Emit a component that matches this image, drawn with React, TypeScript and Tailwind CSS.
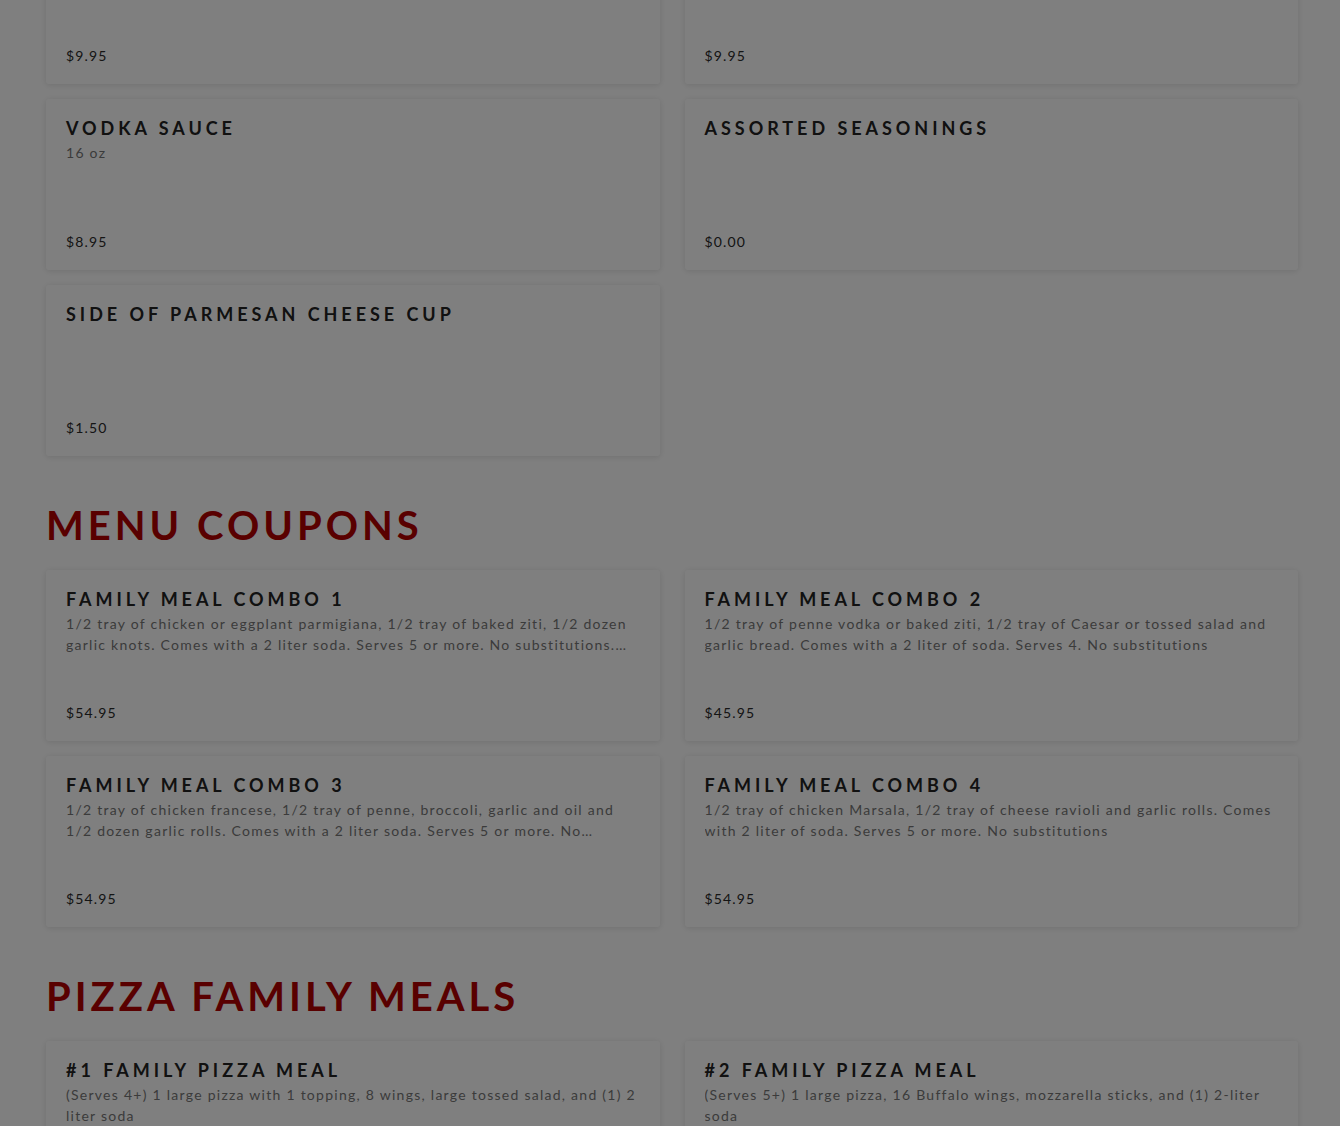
import React from 'react';

type Item = { title: string; desc?: string; price: string };

const topItems: Item[] = [
  { title: 'Marinara Sauce', desc: '16 oz', price: '$9.95' },
  { title: 'Alfredo Sauce', desc: '16 oz', price: '$9.95' },
  { title: 'Vodka Sauce', desc: '16 oz', price: '$8.95' },
  { title: 'Assorted Seasonings', price: '$0.00' },
  { title: 'Side of Parmesan Cheese Cup', price: '$1.50' },
];

const coupons: Item[] = [
  {
    title: 'Family Meal Combo 1',
    desc: '1/2 tray of chicken or eggplant parmigiana, 1/2 tray of baked ziti, 1/2 dozen garlic knots. Comes with a 2 liter soda. Serves 5 or more. No substitutions. Tax not included.',
    price: '$54.95',
  },
  {
    title: 'Family Meal Combo 2',
    desc: '1/2 tray of penne vodka or baked ziti, 1/2 tray of Caesar or tossed salad and garlic bread. Comes with a 2 liter of soda. Serves 4. No substitutions',
    price: '$45.95',
  },
  {
    title: 'Family Meal Combo 3',
    desc: '1/2 tray of chicken francese, 1/2 tray of penne, broccoli, garlic and oil and 1/2 dozen garlic rolls. Comes with a 2 liter soda. Serves 5 or more. No substitutions.',
    price: '$54.95',
  },
  {
    title: 'Family Meal Combo 4',
    desc: '1/2 tray of chicken Marsala, 1/2 tray of cheese ravioli and garlic rolls. Comes with 2 liter of soda. Serves 5 or more. No substitutions',
    price: '$54.95',
  },
];

const pizzaMeals: Item[] = [
  {
    title: '#1 Family Pizza Meal',
    desc: '(Serves 4+) 1 large pizza with 1 topping, 8 wings, large tossed salad, and (1) 2 liter soda',
    price: '$39.95',
  },
  {
    title: '#2 Family Pizza Meal',
    desc: '(Serves 5+) 1 large pizza, 16 Buffalo wings, mozzarella sticks, and (1) 2-liter soda',
    price: '$49.95',
  },
];

const MenuCard: React.FC<{ item: Item }> = ({ item }) => (
  <div className="h-[171px] bg-white rounded-[3px] shadow-[0_1px_6px_rgba(0,0,0,0.12)] pt-4 px-5 pb-5 flex flex-col cursor-pointer">
    <h3 className="mt-px font-['Lato',sans-serif] font-bold uppercase text-[18px] leading-6 tracking-[0.22em] text-[#222]">
      {item.title}
    </h3>
    {item.desc && (
      <p className="mt-0.5 font-['Lato',sans-serif] text-[14px] leading-[21px] tracking-[0.09em] text-[#777] line-clamp-2">
        {item.desc}
      </p>
    )}
    <div className="mt-auto font-['Lato',sans-serif] text-[14px] leading-4 tracking-[0.08em] text-[#2a2a2a]">
      {item.price}
    </div>
  </div>
);

const Section: React.FC<{ title: string; items: Item[] }> = ({ title, items }) => (
  <section>
    <h2 className="mt-[45px] mb-[21px] font-['Lato',sans-serif] font-bold uppercase text-[40px] leading-[48px] tracking-[0.1em] text-[#b30000]">
      {title}
    </h2>
    <div className="grid grid-cols-2 gap-x-[25px] gap-y-[15px]">
      {items.map((item, i) => (
        <MenuCard key={i} item={item} />
      ))}
    </div>
  </section>
);

export default function App() {
  return (
    <div className="relative h-[1126px] overflow-hidden bg-white">
      <div className="w-[1252px] ml-[46px] -mt-[87px]">
        {/* Sides & sauces (continued) */}
        <div className="grid grid-cols-2 gap-x-[25px] gap-y-[15px]">
          {topItems.map((item, i) => (
            <MenuCard key={i} item={item} />
          ))}
        </div>

        <Section title="Menu Coupons" items={coupons} />
        <Section title="Pizza Family Meals" items={pizzaMeals} />
      </div>

      {/* Modal backdrop */}
      <div className="fixed inset-0 bg-black/50" />
    </div>
  );
}
